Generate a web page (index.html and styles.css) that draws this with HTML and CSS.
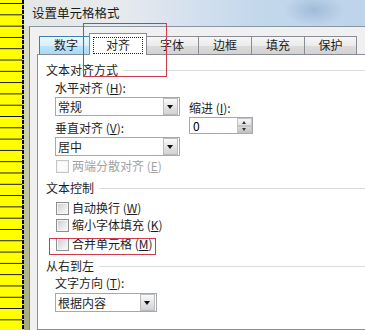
FILE: index.html
```html
<!DOCTYPE html>
<html lang="zh-CN">
<head>
    <meta charset="UTF-8">
    <meta name="viewport" content="width=device-width, initial-scale=1.0">
    <title>设置单元格格式</title>
    <link rel="stylesheet" href="styles.css">
</head>
<body>
    <div class="screen">
        <div class="sheet"></div>
        <div class="marquee"></div>
        <div class="window">
            <div class="titlebar">设置单元格格式</div>
            <div class="client">
                <div class="tabs">
                    <div class="tab hover">数字</div>
                    <div class="tab active"><span class="focus">对齐</span></div>
                    <div class="tab">字体</div>
                    <div class="tab">边框</div>
                    <div class="tab">填充</div>
                    <div class="tab last">保护</div>
                </div>
                <div class="panel">
                    <div class="group-title"><span>文本对齐方式</span><i></i></div>
                    <div class="group align-group">
                        <div class="col-main">
                            <div class="label">水平对齐 (<u>H</u>):</div>
                            <div class="combo wide"><span>常规</span><b class="drop"></b></div>
                            <div class="label gap">垂直对齐 (<u>V</u>):</div>
                            <div class="combo wide"><span>居中</span><b class="drop"></b></div>
                            <div class="check disabled"><b class="box"></b>两端分散对齐 (<u>E</u>)</div>
                        </div>
                        <div class="col-side">
                            <div class="label">缩进 (<u>I</u>):</div>
                            <div class="spin">
                                <span>0</span>
                                <div class="spin-btns">
                                    <b class="up"></b>
                                    <b class="down"></b>
                                </div>
                            </div>
                        </div>
                    </div>

                    <div class="group-title sec"><span>文本控制</span><i></i></div>
                    <div class="group">
                        <div class="check first"><b class="box"></b>自动换行 (<u>W</u>)</div>
                        <div class="check tight"><b class="box"></b>缩小字体填充 (<u>K</u>)</div>
                        <div class="check merge"><b class="box"></b>合并单元格 (<u>M</u>)</div>
                    </div>

                    <div class="group-title sec"><span>从右到左</span><i></i></div>
                    <div class="group">
                        <div class="label tight">文字方向 (<u>T</u>):</div>
                        <div class="combo narrow"><span>根据内容</span><b class="drop"></b></div>
                    </div>
                </div>
            </div>
        </div>

        <div class="mark mark-tab"></div>
        <div class="mark mark-merge"></div>
    </div>
</body>
</html>
```

FILE: styles.css
```css
body {
    margin: 0;
    font-family: "Noto Sans CJK SC", "Microsoft YaHei", sans-serif;
    font-size: 12px;
    color: #1e1e1e;
    background: #fff;
}
u {
    text-decoration: underline;
    text-underline-offset: 1px;
}
.screen {
    position: relative;
    display: flex;
    width: 365px;
    height: 330px;
    overflow: hidden;
}

/* spreadsheet column behind the dialog */
.sheet {
    flex: none;
    width: 22px;
    background-color: #ffff00;
    background-image: linear-gradient(to bottom, transparent 0, transparent 10px, #111 10px, #111 11.3px);
    background-size: 100% 11.3px;
    background-position: 0 4px;
}
.marquee {
    flex: none;
    width: 2px;
    background: repeating-linear-gradient(to bottom, #000 0, #000 4px, #e8e800 4px, #e8e800 5px);
}

/* dialog window */
.window {
    flex: none;
    width: 352px;
    display: flex;
    flex-direction: column;
    background: linear-gradient(to bottom, #e0e1d6, #c6c9ae 50%, #a4a983);
}
.titlebar {
    height: 26px;
    line-height: 25px;
    padding-left: 8px;
    font-size: 12.5px;
    color: #1b1b1b;
    background:
        radial-gradient(ellipse 30px 16px at 290px 10px, rgba(120, 155, 195, 0.45), transparent),
        linear-gradient(to right, #e4e6e6 0, #e8ebee 90px, #d6e2ee 160px, #c4d8ec 230px, #bdd3ea 100%);
}
.client {
    flex: 1;
    margin-left: 5px;
    border-top: 1px solid #8a96a2;
    border-left: 1px solid #7d8388;
    background: #f0f0f0;
    padding: 6px 0 0 7px;
    display: flex;
    flex-direction: column;
}

/* tabs */
.tabs {
    display: flex;
    align-items: flex-end;
    padding-left: 2px;
    height: 21px;
}
.tab {
    box-sizing: border-box;
    width: 53px;
    height: 18px;
    border: 1px solid #898c95;
    border-right: none;
    border-bottom: none;
    background: linear-gradient(to bottom, #f6f6f6, #ebebeb 50%, #dcdcdc 51%, #d2d2d2);
    text-align: center;
    line-height: 16px;
    color: #1e1e1e;
}
.tab.last {
    border-right: 1px solid #898c95;
}
.tab.hover {
    background: linear-gradient(to bottom, #eaf6fd, #d9f0fc 50%, #bee6fd 51%, #a7d9f5);
    border-color: #3c7fb1;
    border-right: none;
}
.tab.active {
    position: relative;
    z-index: 2;
    width: 58px;
    height: 22px;
    margin: 0 -2px -1px -3px;
    border-right: 1px solid #898c95;
    background: #fff;
    padding-top: 4px;
    line-height: 14px;
}
.focus {
    display: inline-block;
    width: 48px;
    height: 15px;
    outline: 1px dotted #222;
    outline-offset: 0;
}

.panel {
    flex: 1;
    background: #fff;
    border: 1px solid #898c95;
    padding: 7px 0 0 8px;
}

/* group headings with rule */
.group-title {
    display: flex;
    align-items: center;
    height: 16px;
    line-height: 16px;
}
.group-title i {
    flex: 1;
    height: 1px;
    margin-left: 5px;
    background: #d9dcdf;
}
.group-title.sec {
    margin-top: 6px;
}
.group {
    padding-left: 9px;
}
.align-group {
    display: flex;
    gap: 9px;
}
.col-main {
    width: 125px;
}
.col-side {
    padding-top: 22px;
}

.label {
    height: 16px;
    line-height: 16px;
    margin-top: 2px;
}
.label.gap {
    margin-top: 4px;
}
.label.tight {
    margin-top: 1px;
}
.col-side .label {
    margin-top: 0;
}

/* combo boxes */
.combo {
    box-sizing: border-box;
    position: relative;
    height: 19px;
    margin-top: 1px;
    border: 1px solid #a4a9b0;
    background: #fff;
    line-height: 17px;
    padding-left: 2px;
}
.combo.wide {
    width: 125px;
}
.combo.narrow {
    width: 102px;
    margin-top: 2px;
}
.drop {
    position: absolute;
    right: 1px;
    top: 0;
    box-sizing: border-box;
    width: 15px;
    height: 17px;
    border: 1px solid #b9bcc0;
    background: linear-gradient(to bottom, #fafafa, #e6e6e6 50%, #d2d2d2);
}
.drop::after {
    content: "";
    position: absolute;
    left: 3px;
    top: 6px;
    border-left: 3.5px solid transparent;
    border-right: 3.5px solid transparent;
    border-top: 4px solid #111;
}

/* indent spinner */
.spin {
    box-sizing: border-box;
    position: relative;
    width: 64px;
    height: 17px;
    margin-top: 1px;
    border: 1px solid #a4a9b0;
    line-height: 15px;
    padding-left: 3px;
    color: #000;
}
.spin-btns {
    position: absolute;
    right: 0;
    top: 0;
    width: 15px;
    height: 15px;
    display: flex;
    flex-direction: column;
}
.spin-btns b {
    flex: 1;
    position: relative;
    border: 1px solid #c2c4c8;
    box-sizing: border-box;
}
.spin-btns .up {
    background: linear-gradient(to bottom, #f6f6f6, #e2e2e2);
}
.spin-btns .down {
    background: linear-gradient(to bottom, #d8d8d8, #c4c4c4);
}
.spin-btns b::after {
    content: "";
    position: absolute;
    left: 4px;
    top: 2px;
    border-left: 2.5px solid transparent;
    border-right: 2.5px solid transparent;
}
.spin-btns .up::after {
    border-bottom: 3px solid #333;
}
.spin-btns .down::after {
    top: 1px;
    border-top: 3px solid #333;
}

/* check boxes */
.check {
    display: flex;
    align-items: center;
    height: 16px;
    line-height: 16px;
    margin-top: 2px;
}
.check.first {
    margin-top: 4px;
}
.check.tight {
    margin-top: 1px;
}
.check.merge {
    margin-top: 3px;
}
.box {
    box-sizing: border-box;
    width: 13px;
    height: 13px;
    margin: 0 3px 0 1px;
    border: 1px solid #8e8f8f;
    background: linear-gradient(135deg, #c9cbcd, #eef0f1 70%, #f8f8f8);
    box-shadow: inset 0 0 0 1px #f4f4f4;
}
.check.disabled {
    color: #a3a3a3;
}
.check.disabled .box {
    border-color: #c6c6c6;
    background: #fbfbfb;
}

/* red annotation frames */
.mark {
    position: absolute;
    border: 1px solid #d03a4c;
}
.mark-tab {
    left: 83px;
    top: 23px;
    width: 82px;
    height: 52px;
}
.mark-merge {
    left: 49px;
    top: 238px;
    width: 105px;
    height: 15px;
}
```
